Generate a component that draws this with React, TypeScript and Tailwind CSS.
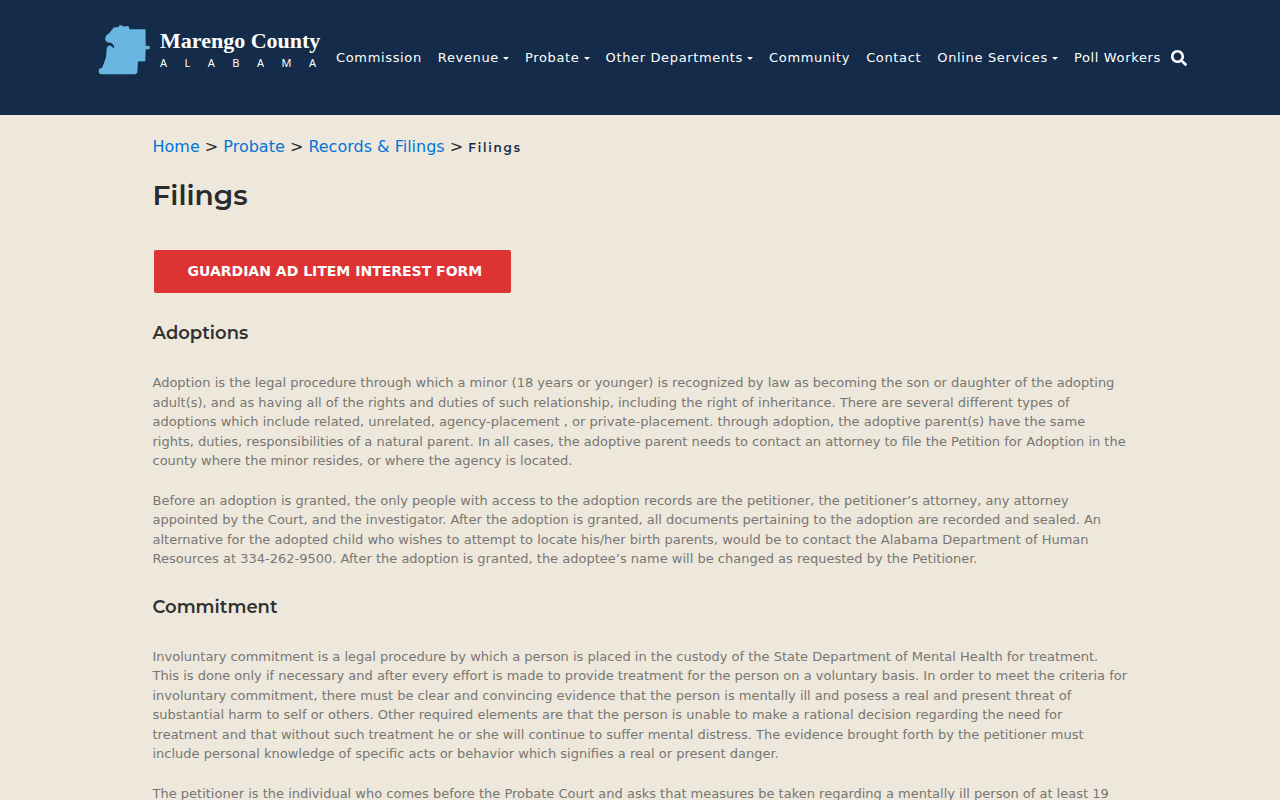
import { FaSearch } from "react-icons/fa";

const navItems = [
  { label: "Commission", hasMenu: false },
  { label: "Revenue", hasMenu: true },
  { label: "Probate", hasMenu: true },
  { label: "Other Departments", hasMenu: true },
  { label: "Community", hasMenu: false },
  { label: "Contact", hasMenu: false },
  { label: "Online Services", hasMenu: true },
  { label: "Poll Workers", hasMenu: false },
];

const breadcrumbs = ["Home", "Probate", "Records & Filings"];

const sections = [
  {
    title: "Adoptions",
    paragraphs: [
      "Adoption is the legal procedure through which a minor (18 years or younger) is recognized by law as becoming the son or daughter of the adopting adult(s), and as having all of the rights and duties of such relationship, including the right of inheritance. There are several different types of adoptions which include related, unrelated, agency-placement , or private-placement. through adoption, the adoptive parent(s) have the same rights, duties, responsibilities of a natural parent. In all cases, the adoptive parent needs to contact an attorney to file the Petition for Adoption in the county where the minor resides, or where the agency is located.",
      "Before an adoption is granted, the only people with access to the adoption records are the petitioner, the petitioner’s attorney, any attorney appointed by the Court, and the investigator. After the adoption is granted, all documents pertaining to the adoption are recorded and sealed. An alternative for the adopted child who wishes to attempt to locate his/her birth parents, would be to contact the Alabama Department of Human Resources at 334-262-9500. After the adoption is granted, the adoptee’s name will be changed as requested by the Petitioner.",
    ],
  },
  {
    title: "Commitment",
    paragraphs: [
      "Involuntary commitment is a legal procedure by which a person is placed in the custody of the State Department of Mental Health for treatment. This is done only if necessary and after every effort is made to provide treatment for the person on a voluntary basis. In order to meet the criteria for involuntary commitment, there must be clear and convincing evidence that the person is mentally ill and posess a real and present threat of substantial harm to self or others. Other required elements are that the person is unable to make a rational decision regarding the need for treatment and that without such treatment he or she will continue to suffer mental distress. The evidence brought forth by the petitioner must include personal knowledge of specific acts or behavior which signifies a real or present danger.",
      "The petitioner is the individual who comes before the Probate Court and asks that measures be taken regarding a mentally ill person of at least 19",
    ],
  },
];

const Logo = () => (
  <a href="#" className="flex shrink-0 items-center gap-2.5 text-white">
    <svg viewBox="0 0 52 50" className="h-[50px] w-[52px]" aria-hidden="true">
      <path
        d="M15.7 2.5 L20.5 2 L21.7 0 L24 0.6 L25 1.6 L30.5 1 L31.5 4.3 L47.5 4.3 L47.7 20.7 L51.7 21 L51.7 24 L47.7 24.6 L47.3 36.3 L40 36.5 L39.3 48 L37 49.3 L4 49.3 Q0.500 49.500 0.700 46 Q0.800 42.800 4 43 L6 38 L8 32.3 L8.700 23.500 Q9.500 20.300 12.500 20.500 L16 23.500 L15.900 20.500 L13.500 18 L9 17.300 Q6.500 15 7.300 12.500 Q7.800 9.500 11 8.500 Z"
        fill="#68b6e1"
      />
    </svg>
    <span className="flex w-[160px] flex-col">
      <span className="font-['Liberation_Serif',serif] text-[22px] leading-[26px] font-bold whitespace-nowrap">
        Marengo County
      </span>
      <span className="flex justify-between pr-1 font-['Noto_Sans',sans-serif] text-[11px] leading-[18px]">
        {"ALABAMA".split("").map((letter, i) => (
          <span key={i}>{letter}</span>
        ))}
      </span>
    </span>
  </a>
);

const Header = () => (
  <header className="bg-[#142c49]">
    <div className="mx-auto flex h-[115px] max-w-[1084px] items-center">
      <div className="mb-4">
        <Logo />
      </div>
      <nav className="ml-2 flex items-center">
        {navItems.map((item) => (
          <a
            key={item.label}
            href="#"
            className="flex items-center gap-1 px-2 text-[13px] leading-5 tracking-wider whitespace-nowrap text-white"
          >
            {item.label}
            {item.hasMenu && (
              <span className="mt-0.5 border-x-3 border-t-3 border-x-transparent border-t-white" />
            )}
          </a>
        ))}
      </nav>
      <button type="button" aria-label="Search" className="ml-0.5 text-white">
        <FaSearch size={16} />
      </button>
    </div>
  </header>
);

export default function App() {
  return (
    <div className="h-screen overflow-hidden bg-[#eee8dc] font-['DejaVu_Sans',sans-serif] text-[#292b2c]">
      <Header />
      <main className="mx-auto max-w-[975px] pt-5">
        <div className="text-base leading-6">
          {breadcrumbs.map((crumb) => (
            <span key={crumb}>
              <a href="#" className="text-[#0275d8]">
                {crumb}
              </a>
              {" > "}
            </span>
          ))}
          <span className="font-[Montserrat,Inter,sans-serif] text-xs font-semibold tracking-[0.15em] text-[#142c49]">
            Filings
          </span>
        </div>

        <h1 className="mt-[18px] mb-[37px] font-[Montserrat,Inter,sans-serif] text-[28px] leading-9 font-semibold">
          Filings
        </h1>

        <a
          href="#"
          className="mb-[22px] ml-px block w-fit rounded-xs bg-[#de3333] py-3 pr-[29px] pl-[34px] text-sm leading-[19px] font-bold text-white"
        >
          GUARDIAN AD LITEM INTEREST FORM
        </a>

        {sections.map((section) => (
          <section key={section.title} className="pt-2">
            <h2 className="mb-[30px] font-[Montserrat,Inter,sans-serif] text-lg leading-5 font-semibold text-[#313131]">
              {section.title}
            </h2>
            {section.paragraphs.map((text) => (
              <p key={text} className="mb-5 text-[13px] leading-normal text-[#777672]">
                {text}
              </p>
            ))}
          </section>
        ))}
      </main>
    </div>
  );
}
